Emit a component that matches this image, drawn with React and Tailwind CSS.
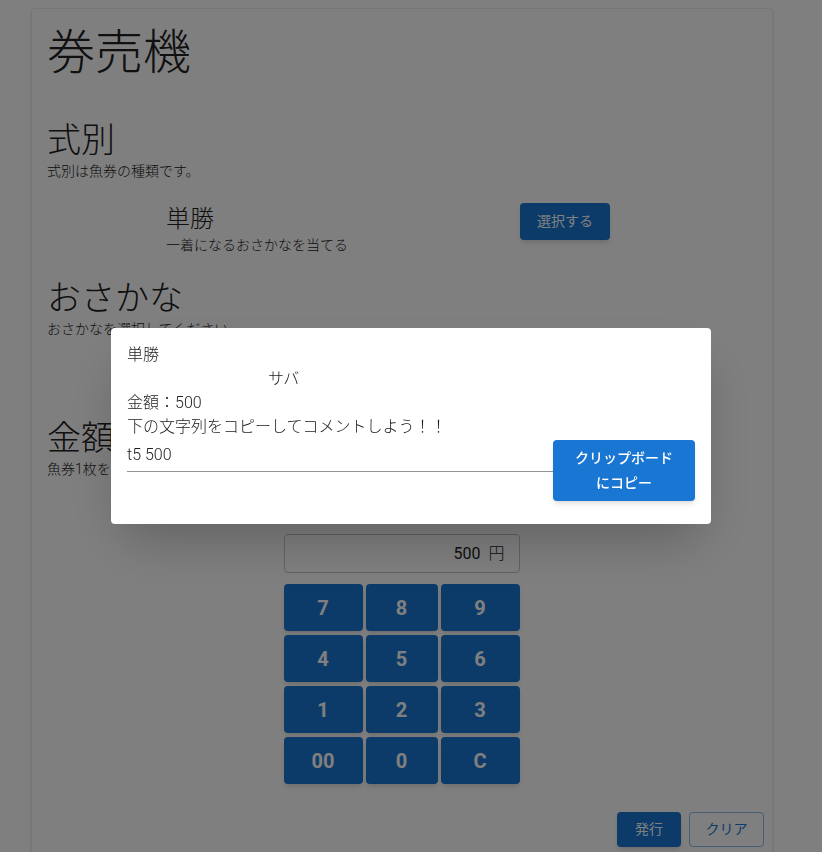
import React, { useState } from "react";

const keys = ["7", "8", "9", "4", "5", "6", "1", "2", "3", "00", "0", "C"];

export default function App() {
  const [amount] = useState(500);

  return (
    <div className="min-h-screen bg-white text-[#212121] font-light font-['Roboto','Noto_Sans_CJK_JP',sans-serif]">
      <div className="ml-[31px] mt-2 w-[742px] rounded border border-[#ececec] shadow-sm pt-4 pb-2">
        <div className="pl-[15px] pr-4">
          <h1 className="text-[48px] leading-[56px]">券売機</h1>

          <h2 className="mt-[38px] text-[34px] leading-[42px]">式別</h2>
          <p className="text-[14px] leading-[20px]">式別は魚券の種類です。</p>

          <div className="mt-[22px] flex pl-[119px]">
            <div className="w-[354px]">
              <div className="text-[24px] leading-[32px]">単勝</div>
              <div className="text-[14px] leading-[20px]">一着になるおさかなを当てる</div>
            </div>
            <button className="h-[37px] w-[90px] rounded bg-[#1976d2] text-[14px] font-normal text-white shadow-md">
              選択する
            </button>
          </div>

          <h2 className="mt-[22px] text-[34px] leading-[42px]">おさかな</h2>
          <p className="text-[14px] leading-[20px]">おさかなを選択してください</p>

          <h2 className="mt-[78px] text-[34px] leading-[42px]">金額</h2>
          <p className="text-[14px] leading-[20px]">魚券1枚を購入する金額を入力してください</p>

          <div className="mx-auto mt-[55px] w-[236px]">
            <div className="flex h-[39px] items-center justify-end gap-2 rounded border border-[#c4c4c4] px-[14px] text-[16px] font-normal">
              <span>{amount}</span>
              <span className="font-light">円</span>
            </div>
            <div className="mt-[11px] grid grid-cols-[79px_72px_79px] gap-x-[3px] gap-y-[4px]">
              {keys.map((k) => (
                <button
                  key={k}
                  className="h-[47px] rounded bg-[#1976d2] text-[20px] font-bold text-white shadow-md"
                >
                  {k}
                </button>
              ))}
            </div>
          </div>
        </div>

        <div className="mt-[28px] flex justify-end gap-2 px-2">
          <button className="h-[35px] w-[64px] rounded bg-[#1976d2] text-[14px] font-normal text-white shadow-md">発行</button>
          <button className="h-[35px] w-[75px] rounded border border-[#1976d2]/50 text-[14px] font-normal text-[#1976d2]">
            クリア
          </button>
        </div>
      </div>

      {/* dialog */}
      <div className="fixed inset-0 flex items-center justify-center bg-black/50">
        <div className="w-[600px] rounded bg-white px-4 pt-[15px] pb-[23px] text-[16px] leading-[24px] shadow-2xl">
          <div>単勝</div>
          <div className="pl-[141px]">サバ</div>
          <div>金額：500</div>
          <div>下の文字列をコピーしてコメントしよう！！</div>
          <div className="flex items-start">
            <div className="flex-1 border-b border-[#949494] pt-[4px] pb-[5px] leading-[23px]">t5 500</div>
            <button className="mt-px w-[142px] rounded bg-[#1976d2] px-4 py-[6px] text-[14px] font-medium leading-[24.5px] text-white shadow-md">
              クリップボード
              <br />
              にコピー
            </button>
          </div>
        </div>
      </div>
    </div>
  );
}
